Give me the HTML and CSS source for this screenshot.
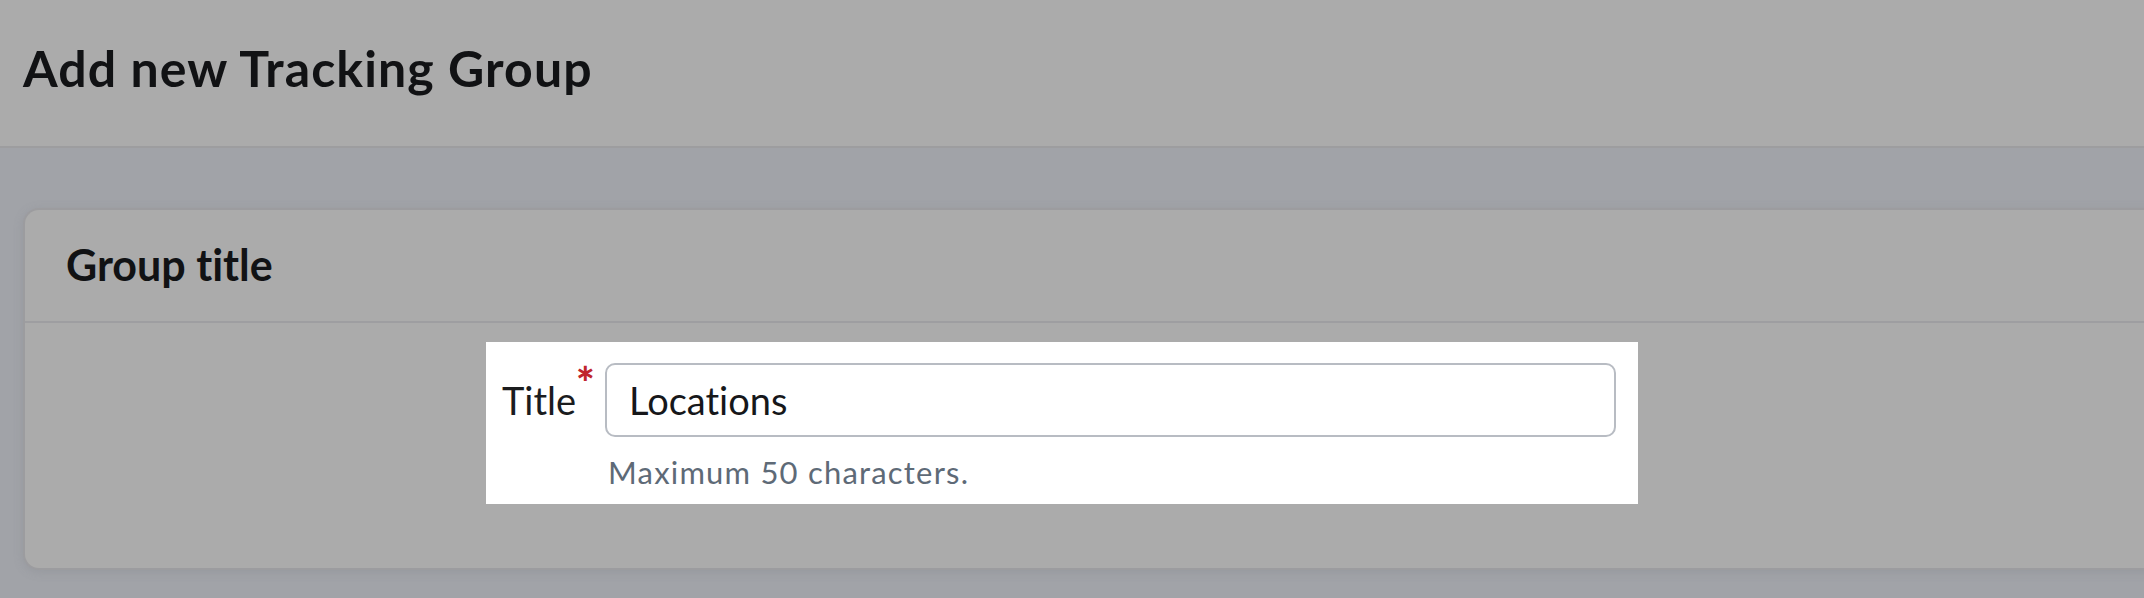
FILE: index.html
```html
<!DOCTYPE html>
<html lang="en">
<head>
<meta charset="utf-8">
<title>Add new Tracking Group</title>
<link rel="stylesheet" href="styles.css">
</head>
<body>
<header class="page-header">
  <h1 class="page-title">Add new Tracking Group</h1>
</header>
<main class="content">
  <section class="card">
    <div class="card-header">
      <h2 class="card-title">Group title</h2>
    </div>
    <div class="card-body">
      <div class="form-row highlight">
        <label class="field-label" for="title">Title<span class="required">*</span></label>
        <div class="field">
          <input class="text-input" id="title" type="text" value="Locations">
          <p class="hint">Maximum 50 characters.</p>
        </div>
      </div>
    </div>
  </section>
</main>
</body>
</html>
```

FILE: styles.css
```css
html, body {
  margin: 0;
  padding: 0;
  overflow: hidden;
}

body {
  background: #a1a3a8;
  font-family: Lato, "Liberation Sans", sans-serif;
  font-variant-ligatures: none;
  color: #121316;
  height: 598px;
}

.page-header {
  background: #ababab;
  border-bottom: 2px solid #9d9d9f;
  padding: 38px 23px 48px;
}

.page-title {
  margin: 0;
  font-size: 50px;
  line-height: 60px;
  font-weight: 700;
  letter-spacing: 1.1px;
  color: #111214;
}

.content {
  padding: 60px 0 0 23px;
}

.card {
  background: #ababab;
  border: 2px solid #9c9c9f;
  border-right: none;
  border-radius: 16px 0 0 16px;
  margin-right: -40px;
  box-shadow: 0 2px 10px rgba(120, 124, 132, 0.25);
}

.card-header {
  border-bottom: 2px solid #9e9ea1;
  padding: 29px 0 30px 41px;
}

.card-title {
  margin: 0;
  font-size: 43px;
  line-height: 52px;
  font-weight: 700;
  color: #111214;
}

.card-body {
  padding: 19px 0 64px 461px;
}

.highlight {
  background: #ffffff;
  width: 1152px;
  box-sizing: border-box;
}

.form-row {
  display: flex;
  align-items: flex-start;
  padding: 21px 22px 14px 16px;
}

.field-label {
  width: 87px;
  margin-right: 16px;
  white-space: nowrap;
  font-size: 38px;
  line-height: 74px;
  color: #1b1c1e;
}

.required {
  display: inline-block;
  vertical-align: top;
  font-size: 44px;
  line-height: 38px;
  font-weight: 900;
  color: #c0262d;
  margin-left: 0;
}

.field {
  flex: 1;
}

.text-input {
  display: block;
  width: 100%;
  height: 74px;
  box-sizing: border-box;
  border: 2px solid #b8bcc3;
  border-radius: 10px;
  padding: 0 22px;
  font-family: Lato, "Liberation Sans", sans-serif;
  font-variant-ligatures: none;
  font-size: 38px;
  color: #16171a;
  background: #ffffff;
  outline: none;
}

.hint {
  margin: 17px 0 0 3px;
  font-size: 31px;
  line-height: 36px;
  letter-spacing: 1.2px;
  color: #5e6a77;
}
```
